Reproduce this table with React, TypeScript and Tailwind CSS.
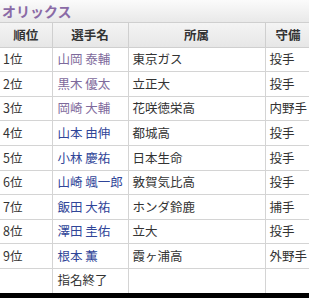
const rows = [
  { rank: "1位", name: "山岡 泰輔", team: "東京ガス", pos: "投手", visited: true },
  { rank: "2位", name: "黒木 優太", team: "立正大", pos: "投手", visited: true },
  { rank: "3位", name: "岡崎 大輔", team: "花咲徳栄高", pos: "内野手", visited: true },
  { rank: "4位", name: "山本 由伸", team: "都城高", pos: "投手", visited: false },
  { rank: "5位", name: "小林 慶祐", team: "日本生命", pos: "投手", visited: false },
  { rank: "6位", name: "山崎 颯一郎", team: "敦賀気比高", pos: "投手", visited: false },
  { rank: "7位", name: "飯田 大祐", team: "ホンダ鈴鹿", pos: "捕手", visited: false },
  { rank: "8位", name: "澤田 圭佑", team: "立大", pos: "投手", visited: false },
  { rank: "9位", name: "根本 薫", team: "霞ヶ浦高", pos: "外野手", visited: false },
];

export default function App() {
  return (
    <div className="w-[309px] h-[298px] overflow-hidden bg-black font-['Noto_Sans_CJK_JP',sans-serif]">
      <div className="h-[293px] bg-white overflow-hidden">
        <div className="h-[22px] pl-[2px] flex items-center bg-gradient-to-b from-[#fbfbfb] to-[#e9e9e9] text-[14px] font-bold text-[#8a6aa6] leading-none">
          オリックス
        </div>
        <table className="w-[330px] border-collapse text-[12.5px] text-[#333] leading-none">
          <thead>
            <tr className="h-[24.6px] bg-gradient-to-b from-[#f4f4f4] to-[#e6e6e6]">
              <th className="w-[52px] border-y border-r border-[#cfcfcf] font-bold text-center">順位</th>
              <th className="w-[76px] border border-[#cfcfcf] font-bold text-center">選手名</th>
              <th className="w-[137px] border border-[#cfcfcf] font-bold text-center">所属</th>
              <th className="border border-[#cfcfcf] font-bold text-left pl-[10px]">守備</th>
            </tr>
          </thead>
          <tbody>
            {rows.map((r) => (
              <tr key={r.rank} className="h-[24.6px]">
                <td className="border-y border-r border-[#d4d4d4] pl-[3px]">{r.rank}</td>
                <td className={`border border-[#d4d4d4] pl-[5px] ${r.visited ? "text-[#7e6a9c]" : "text-[#2f4598]"}`}>{r.name}</td>
                <td className="border border-[#d4d4d4] pl-[4px]">{r.team}</td>
                <td className="border border-[#d4d4d4] pl-[4px]">{r.pos}</td>
              </tr>
            ))}
            <tr className="h-[24.6px]">
              <td className="border-y border-r border-[#d4d4d4]"></td>
              <td className="border border-[#d4d4d4] pl-[5px]">指名終了</td>
              <td className="border border-[#d4d4d4]"></td>
              <td className="border border-[#d4d4d4]"></td>
            </tr>
          </tbody>
        </table>
      </div>
    </div>
  );
}
